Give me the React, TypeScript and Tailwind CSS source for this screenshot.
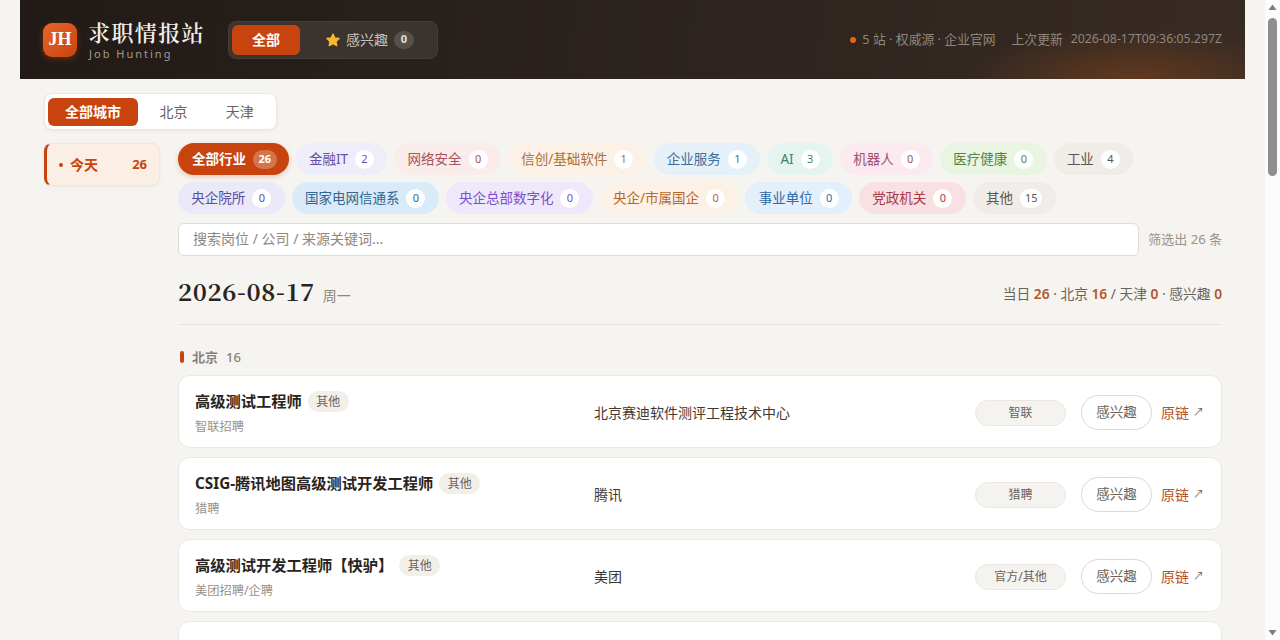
import React from "react";

const sans = '"Noto Sans", "Noto Sans CJK SC", sans-serif';

type Chip = { label: string; count: number; cls: string };

const chipsRowOne: Chip[] = [
  { label: "金融IT", count: 2, cls: "bg-[#f0edfb] text-[#5f52a8]" },
  { label: "网络安全", count: 0, cls: "bg-[#fbecec] text-[#a8525c]" },
  { label: "信创/基础软件", count: 1, cls: "bg-[#fcf1e6] text-[#a8703c]" },
  { label: "企业服务", count: 1, cls: "bg-[#e6f0f9] text-[#3f6d9e]" },
  { label: "AI", count: 3, cls: "bg-[#e6f4f0] text-[#3f8070]" },
  { label: "机器人", count: 0, cls: "bg-[#fbeaf0] text-[#a04f72]" },
  { label: "医疗健康", count: 0, cls: "bg-[#e9f4e3] text-[#5a8443]" },
  { label: "工业", count: 4, cls: "bg-[#f0ede8] text-[#5c554d]" },
];

const chipsRowTwo: Chip[] = [
  { label: "央企院所", count: 0, cls: "bg-[#ebe8f7] text-[#574ea3]" },
  { label: "国家电网信通系", count: 0, cls: "bg-[#d9ebf8] text-[#2f6590]" },
  { label: "央企总部数字化", count: 0, cls: "bg-[#eee8fa] text-[#7a4fd0]" },
  { label: "央企/市属国企", count: 0, cls: "bg-[#fcf1e4] text-[#b8682a]" },
  { label: "事业单位", count: 0, cls: "bg-[#e3effa] text-[#2f6aa5]" },
  { label: "党政机关", count: 0, cls: "bg-[#f9e0e2] text-[#a83a48]" },
  { label: "其他", count: 15, cls: "bg-[#f0ede8] text-[#5c554d]" },
];

const jobs = [
  { title: "高级测试工程师", tag: "其他", tagCls: "bg-[#f2efe9] text-[#6b635a]", sub: "智联招聘", company: "北京赛迪软件测评工程技术中心", source: "智联" },
  { title: "CSIG-腾讯地图高级测试开发工程师", tag: "其他", tagCls: "bg-[#f2efe9] text-[#6b635a]", sub: "猎聘", company: "腾讯", source: "猎聘" },
  { title: "高级测试开发工程师【快驴】", tag: "其他", tagCls: "bg-[#f2efe9] text-[#6b635a]", sub: "美团招聘/企聘", company: "美团", source: "官方/其他" },
  { title: "测试开发工程师（企业服务）", tag: "企业服务", tagCls: "bg-[#e6f0f9] text-[#3f6d9e]", sub: "", company: "", source: "" },
];

function IndustryChip({ chip }: { chip: Chip }) {
  return (
    <div className={`flex h-8 items-center gap-[7px] rounded-full px-[13.3px] text-[13.5px] ${chip.cls}`}>
      <span>{chip.label}</span>
      <span className="flex h-[19px] min-w-[19px] items-center justify-center rounded-full bg-white px-[5px] text-[11px]">
        {chip.count}
      </span>
    </div>
  );
}

function JobCard({ job }: { job: (typeof jobs)[number] }) {
  return (
    <div className="grid h-[73px] shrink-0 grid-cols-[399px_1fr_auto] items-center rounded-[12px] border border-[#ece8e1] bg-white pt-[2px] pr-[17px] pl-4">
      <div className="pt-[2px]">
        <div className="flex items-center gap-[6px]">
          <span className="text-[15.25px] font-bold text-[#2a2420]">{job.title}</span>
          <span className={`flex h-[21px] items-center rounded-full px-[8.5px] text-[12px] ${job.tagCls}`}>{job.tag}</span>
        </div>
        <div className="mt-[5px] text-[12.25px] text-[#9a928a]">{job.sub}</div>
      </div>
      <div className="text-[14px] text-[#3f3833]">{job.company}</div>
      {job.source && (
        <div className="flex items-center">
          <span className="flex h-[26px] w-[91px] items-center justify-center rounded-full border border-[#ebe7e0] bg-[#f5f3ef] text-[12px] text-[#6b635a]">
            {job.source}
          </span>
          <span className="ml-[15px] flex h-[35px] w-[71px] items-center justify-center rounded-full border border-[#ddd8d0] bg-white text-[13.5px] text-[#6b635a]">
            感兴趣
          </span>
          <span className="ml-[9px] flex items-center text-[14px] text-[#b5532a]">
            原链<span className="ml-[4px] text-[11px] text-[#8a5a44]">↗</span>
          </span>
        </div>
      )}
    </div>
  );
}

// headless chrome hides the native bar, so it is drawn here
function ScrollBar() {
  return (
    <div className="flex h-full w-[15px] shrink-0 flex-col items-center bg-[#fcfcfc]">
      <svg width="15" height="15" viewBox="0 0 15 15" className="shrink-0">
        <path d="M7.5 4.5 L11.5 10 L3.5 10 Z" fill="#7d7d7d" />
      </svg>
      <div className="mt-[3px] h-[158px] w-[9px] rounded-full bg-[#8f8f8f]" />
      <svg width="15" height="15" viewBox="0 0 15 15" className="mt-auto shrink-0">
        <path d="M7.5 10.5 L11.5 5 L3.5 5 Z" fill="#7d7d7d" />
      </svg>
    </div>
  );
}

export default function App() {
  return (
    <div className="flex h-screen overflow-hidden bg-[#f6f4f0]" style={{ fontFamily: sans }}>
      <div className="min-w-0 flex-1">
        <header className="mx-5 flex h-[79px] items-center justify-between bg-[radial-gradient(ellipse_170px_50px_at_91%_100%,rgba(140,72,28,0.5),transparent),linear-gradient(100deg,#211a16_0%,#2e2520_60%,#382b23_100%)] pr-[23px] pl-[23px]">
          <div className="flex items-center">
            <div className="flex h-[34px] w-[34px] items-center justify-center rounded-[9px] bg-[linear-gradient(135deg,#e8642a,#c8440e)] text-[18px] font-bold text-white [font-family:'Liberation_Serif',serif] shadow-[0_2px_6px_rgba(200,68,14,0.4)]">
              JH
            </div>
            <div className="ml-3">
              <div className="-ml-px text-[22px] font-semibold leading-[26px] tracking-[1.4px] text-[#f3eee8] [font-family:'Noto_Serif_CJK_SC','Noto_Sans_CJK_SC',serif]">
                求职情报站
              </div>
              <div className="mt-[2px] text-[11px] leading-[14px] tracking-[2px] text-[#a39a90]">Job Hunting</div>
            </div>
            <div className="ml-[23px] flex h-[38px] w-[210px] items-center rounded-[8px] border border-[#453d37] bg-[#3a332e] p-[3px]">
              <div className="flex h-[30px] w-[68px] items-center justify-center rounded-[6px] bg-[#c8440e] text-[14px] font-bold text-white">
                全部
              </div>
              <div className="ml-[25px] flex items-center text-[14px] text-[#c9c2ba]">
                <svg width="16" height="16" viewBox="0 0 24 24" fill="#f5b82e" stroke="#f5b82e" strokeWidth="2" strokeLinejoin="round">
                  <path d="M12 3l2.8 5.9 6.4.8-4.7 4.4 1.2 6.4L12 17.4l-5.7 3.1 1.2-6.4L2.8 9.7l6.4-.8z" />
                </svg>
                <span className="ml-[5px]">感兴趣</span>
                <span className="ml-[6px] flex h-[18px] w-5 items-center justify-center rounded-full bg-[#57504a] text-[11px] font-bold text-[#e6e0d8]">0</span>
              </div>
            </div>
          </div>
          <div className="flex items-center text-[#8f867c]">
            <span className="h-[6px] w-[6px] rounded-full bg-[#e8641c]" />
            <span className="ml-[6px] text-[12.8px]">5 站 · 权威源 · 企业官网</span>
            <span className="ml-4 text-[12.8px]">上次更新</span>
            <span className="ml-2 text-[12.3px]">2026-08-17T09:36:05.297Z</span>
          </div>
        </header>

        <div className="mr-[43px] ml-11 pt-[14px]">
          <div className="flex h-[37px] w-[233px] items-center rounded-[8px] border border-[#ece8e1] bg-white p-[3px] shadow-[0_1px_3px_rgba(60,40,20,0.06)]">
            <div className="flex h-7 w-[91px] items-center justify-center rounded-[6px] bg-[#c8440e] text-[14px] font-bold text-white">全部城市</div>
            <div className="ml-[2px] w-[67px] text-center text-[14px] text-[#6b635a]">北京</div>
            <div className="w-[67px] text-center text-[14px] text-[#6b635a]">天津</div>
          </div>

          <div className="mt-[13px] flex items-start">
            <div className="flex h-[43px] w-[116px] shrink-0 items-center rounded-[8px] border border-l-[3px] border-[#f0e6dc] border-l-[#c8440e] bg-[#fbeee4] pr-3 pl-3 text-[14px] font-bold text-[#c8440e] shadow-[0_1px_3px_rgba(60,40,20,0.05)]">
              <span className="h-1 w-1 rounded-full bg-[#c8440e]" />
              <span className="ml-[7px]">今天</span>
              <span className="ml-auto text-[13px]">26</span>
            </div>

            <div className="ml-[18px] min-w-0 flex-1">
              <div className="flex flex-col gap-[7px]">
                <div className="flex gap-[7px]">
                  <div className="flex h-8 items-center gap-[7px] rounded-full bg-[#c8440e] pr-[12px] pl-[14px] text-[13.5px] font-bold text-white shadow-[0_2px_5px_rgba(200,68,14,0.25)]">
                    <span>全部行业</span>
                    <span className="flex h-[19px] items-center rounded-full bg-white/25 px-[5.5px] text-[11px]">26</span>
                  </div>
                  {chipsRowOne.map((chip) => (
                    <IndustryChip key={chip.label} chip={chip} />
                  ))}
                </div>
                <div className="flex gap-[7px]">
                  {chipsRowTwo.map((chip) => (
                    <IndustryChip key={chip.label} chip={chip} />
                  ))}
                </div>
              </div>

              <div className="mt-[9px] flex items-center">
                <div className="flex h-[33px] flex-1 items-center rounded-[6px] border border-[#e0dbd3] bg-white pb-[2px] pl-[14px] text-[14px] text-[#8f877e]">
                  搜索岗位 / 公司 / 来源关键词...
                </div>
                <div className="ml-[9px] text-[13px] text-[#9a928a]">筛选出 26 条</div>
              </div>

              <div className="mt-[19px] flex items-center justify-between border-b border-[#e9e5de] pb-[17px]">
                <div className="flex items-baseline">
                  <span className="text-[24px] font-bold leading-[32px] tracking-[0.6px] text-[#2a2420] oldstyle-nums [font-family:'Noto_Serif_CJK_SC','Liberation_Serif',serif]">2026-08-17</span>
                  <span className="ml-2 text-[14px] text-[#8f877e]">周一</span>
                </div>
                <div className="mt-[7px] text-[13.75px] text-[#6b635a]">
                  当日 <b className="font-semibold text-[#b5532a]">26</b> · 北京 <b className="font-semibold text-[#b5532a]">16</b> / 天津 <b className="font-semibold text-[#b5532a]">0</b> · 感兴趣 <b className="font-semibold text-[#b5532a]">0</b>
                </div>
              </div>

              <div className="mt-[23px] flex items-center pl-[2px] text-[13px] font-bold leading-[18px] text-[#86807a]">
                <span className="h-3 w-[4px] rounded-full bg-[#c8440e]" />
                <span className="ml-2">北京</span>
                <span className="ml-2 font-medium">16</span>
              </div>

              <div className="mt-[9px] flex flex-col gap-[9px]">
                {jobs.map((job) => (
                  <JobCard key={job.title} job={job} />
                ))}
              </div>
            </div>
          </div>
        </div>
      </div>
      <ScrollBar />
    </div>
  );
}
